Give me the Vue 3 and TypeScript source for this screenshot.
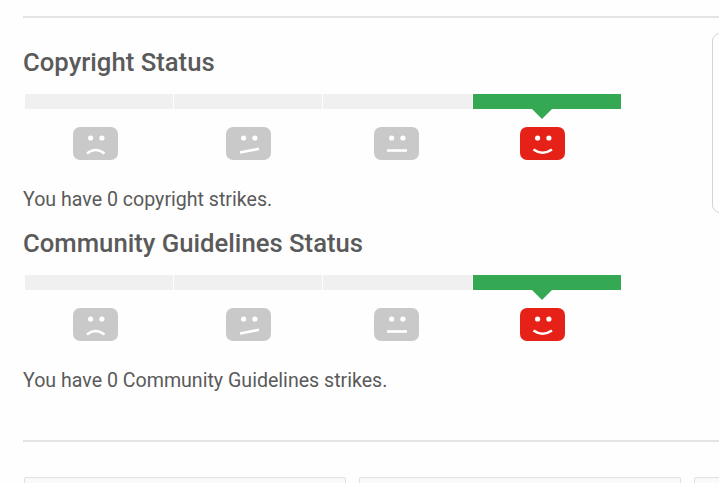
<script setup lang="ts">
type Face = {
    key: string;
    mouth: string;
    left: number;
};

const faces: Face[] = [
    { key: 'sad', mouth: 'M14 26.5 Q22.5 19.5 31.5 26.5', left: 48 },
    { key: 'unsure', mouth: 'M14 25.6 L33 21.8', left: 52 },
    { key: 'neutral', mouth: 'M13 23.5 L33 23.5', left: 51 },
    { key: 'happy', mouth: 'M13.5 22.5 Q22.5 29 32 22.5', left: 47 },
];

const sections = [
    { title: 'Copyright Status', note: 'You have 0 copyright strikes.' },
    { title: 'Community Guidelines Status', note: 'You have 0 Community Guidelines strikes.' },
];

const activeIndex = 3;
const cards = [1, 2, 3];
</script>

<template>
    <div class="page">
        <div class="rule"></div>

        <div class="statusRow">
            <div class="statusList">
                <section v-for="section in sections" :key="section.title" class="status">
                    <h2 class="title">{{ section.title }}</h2>

                    <div class="meter">
                        <div v-for="(face, i) in faces" :key="face.key" class="step">
                            <div class="bar" :class="{ barActive: i === activeIndex }"></div>
                            <svg class="face" :style="{ marginLeft: face.left + 'px' }" viewBox="0 0 45 33" width="45" height="33">
                                <rect width="45" height="33" rx="7" :fill="i === activeIndex ? '#e62117' : '#c9c9c9'" />
                                <circle cx="17.6" cy="11" r="2.6" fill="#fff" />
                                <circle cx="28.9" cy="11" r="2.6" fill="#fff" />
                                <path :d="face.mouth" fill="none" stroke="#fff" stroke-width="2.6" />
                            </svg>
                        </div>
                    </div>

                    <p class="note">{{ section.note }}</p>
                </section>
            </div>

            <aside class="sideCard"></aside>
        </div>

        <div class="rule lowerRule"></div>

        <div class="cards">
            <div v-for="card in cards" :key="card" class="card"></div>
        </div>
    </div>
</template>

<style>
html,
body {
    margin: 0;
    background: #fefefe;
}
</style>

<style scoped>
.page {
    height: 483px;
    width: 719px;
    overflow: hidden;
    box-sizing: border-box;
    padding: 16px 0 0 23px;
    background: #fefefe;
    color: #5a5a5a;
    font-family: Roboto, "Liberation Sans", sans-serif;
}

.rule {
    height: 2px;
    background: #e4e4e4;
}

.statusRow {
    display: flex;
    align-items: flex-start;
}

.statusList {
    flex: 0 0 689px;
}

.status {
    height: 181px;
}

.status:first-child {
    padding-top: 28px;
}

.title {
    margin: 0;
    font-size: 25.7px;
    line-height: 32px;
    font-weight: 500;
}

.meter {
    display: grid;
    grid-template-columns: 148px 148px 149px 148px;
    gap: 1px;
    margin: 16px 0 0 2px;
}

.step {
    display: flex;
    flex-direction: column;
    align-items: flex-start;
}

.bar {
    position: relative;
    width: 100%;
    height: 15px;
    background: #f0f0f0;
}

.barActive {
    background: #34a853;
}

.barActive::after {
    content: '';
    position: absolute;
    left: 59px;
    top: 15px;
    border-style: solid;
    border-width: 10px 10px 0;
    border-color: #34a853 transparent transparent;
}

.face {
    display: block;
    margin-top: 18px;
}

.note {
    margin: 27px 0 0;
    font-size: 19.6px;
    line-height: 26px;
}

.sideCard {
    flex: 0 0 120px;
    height: 180px;
    margin-top: 15px;
    box-sizing: border-box;
    border: 1px solid #d4d4d4;
    border-radius: 8px;
}

.lowerRule {
    margin-top: 32px;
}

.cards {
    display: flex;
    gap: 13px;
    margin: 35px 0 0 1px;
}

.card {
    flex: 0 0 322px;
    height: 40px;
    box-sizing: border-box;
    border: 1px solid #e0e0e0;
    border-radius: 2px;
    background: #fafafa;
}
</style>
